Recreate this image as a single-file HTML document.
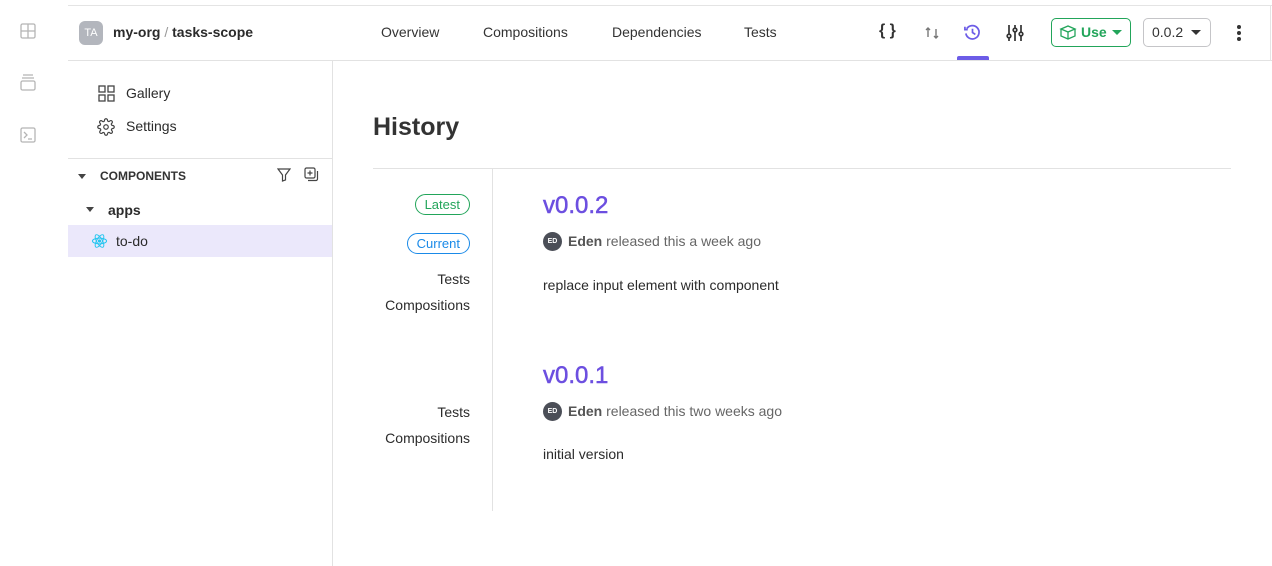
<!DOCTYPE html><html><head><style>
*{margin:0;padding:0;box-sizing:border-box}
body{width:1272px;height:566px;background:#fff;font-family:"Liberation Sans",sans-serif;color:#2b2b2b;position:relative;overflow:hidden;font-size:14px}
.a{position:absolute}
.rail svg{position:absolute;left:20px}
.nav{font-size:14px;color:#333}
.pill{position:absolute;border-radius:12px;font-size:13px;padding:2px 9px;line-height:15px}
.gray{color:#666}
.r{position:absolute;right:802px}
</style></head><body>
<div class="a" style="left:68px;top:5px;width:1204px;height:1px;background:#e4e4e4"></div>
<div class="a" style="left:68px;top:60px;width:1204px;height:1px;background:#e2e2e2"></div>
<div class="a" style="left:332px;top:61px;width:1px;height:505px;background:#e2e2e2"></div>
<div class="a" style="left:1270px;top:5px;width:1px;height:56px;background:#e4e4e4"></div>
<div class="rail">
<svg style="top:23px" width="16" height="16" viewBox="0 0 16 16" fill="none" stroke="#b5b5b5" stroke-width="1.3"><rect x="1" y="1" width="14" height="14" rx="1.5"/><path d="M8 1v14M1 8h14"/></svg>
<svg style="top:74px" width="16" height="18" viewBox="0 0 16 18" fill="none" stroke="#b5b5b5" stroke-width="1.3"><path d="M3 1h10M2 4h12"/><rect x="1" y="7" width="14" height="9" rx="1.5"/></svg>
<svg style="top:127px" width="16" height="16" viewBox="0 0 16 16" fill="none" stroke="#b5b5b5" stroke-width="1.3"><rect x="1" y="1" width="14" height="14" rx="1.5"/><path d="M4 5l3 3-3 3M8 12h4"/></svg>
</div>
<div class="a" style="left:79px;top:21px;width:24px;height:24px;border-radius:6px;background:#b3b6bd;color:#fff;font-size:11px;text-align:center;line-height:24px">TA</div>
<div class="a" style="left:113px;top:24px;font-weight:bold;font-size:14px">my-org<span style="color:#999;font-weight:normal"> / </span>tasks-scope</div>
<div class="a nav" style="left:381px;top:24px">Overview</div>
<div class="a nav" style="left:483px;top:24px">Compositions</div>
<div class="a nav" style="left:612px;top:24px">Dependencies</div>
<div class="a nav" style="left:744px;top:24px">Tests</div>
<div class="a" style="left:879px;top:22px;font-size:16px;font-weight:bold;color:#333">{ }</div>
<svg class="a" style="left:924px;top:25px" width="16" height="16" viewBox="0 0 16 16" fill="none" stroke="#777" stroke-width="1.4"><path d="M4 3v9M2 5l2-2 2 2M12 13V4M10 11l2 2 2-2"/></svg>
<svg class="a" style="left:963px;top:23px" width="19" height="19" viewBox="0 0 20 20" fill="none" stroke="#6c5ce7" stroke-width="1.8"><path d="M4 6a7 7 0 1 1-1 5"/><path d="M2 4v3h3"/><path d="M10 6v4l3 2"/></svg>
<div class="a" style="left:957px;top:56px;width:32px;height:4px;border-radius:2px 2px 0 0;background:#6c5ce7"></div>
<svg class="a" style="left:1005px;top:23px" width="20" height="20" viewBox="0 0 20 20" fill="none" stroke="#333" stroke-width="1.7"><path d="M4 2v16M10 2v16M16 2v16"/><circle cx="4" cy="13" r="1.8" fill="#fff"/><circle cx="10" cy="7" r="1.8" fill="#fff"/><circle cx="16" cy="11" r="1.8" fill="#fff"/></svg>
<div class="a" style="left:1051px;top:18px;width:80px;height:29px;border:1px solid #22a55a;border-radius:5px"></div>
<svg class="a" style="left:1059px;top:24px" width="18" height="17" viewBox="0 0 18 17" fill="none" stroke="#22a55a" stroke-width="1.3"><path d="M2 5l7-3 7 3-7 3zM2 5v7l7 3 7-3V5M9 8v7"/></svg>
<div class="a" style="left:1081px;top:24px;color:#22a55a;font-weight:bold">Use</div>
<div class="a" style="left:1112px;top:30px;border:5px solid transparent;border-top:5px solid #22a55a"></div>
<div class="a" style="left:1143px;top:18px;width:68px;height:29px;border:1px solid #c5c5c8;border-radius:5px"></div>
<div class="a" style="left:1152px;top:24px;color:#333">0.0.2</div>
<div class="a" style="left:1191px;top:30px;border:5px solid transparent;border-top:5px solid #333"></div>
<div class="a" style="left:1237px;top:25px;width:4px;height:4px;border-radius:2px;background:#333;box-shadow:0 6px #333,0 12px #333"></div>
<svg class="a" style="left:98px;top:85px" width="17" height="17" viewBox="0 0 17 17" fill="none" stroke="#444" stroke-width="1.3"><rect x="1" y="1" width="6" height="6"/><rect x="10" y="1" width="6" height="6"/><rect x="1" y="10" width="6" height="6"/><rect x="10" y="10" width="6" height="6"/></svg>
<div class="a" style="left:126px;top:85px">Gallery</div>
<svg class="a" style="left:97px;top:118px" width="18" height="18" viewBox="0 0 24 24" fill="none" stroke="#444" stroke-width="1.6"><circle cx="12" cy="12" r="3"/><path d="M19.4 15a1.7 1.7 0 0 0 .3 1.8l.1.1a2 2 0 1 1-2.8 2.8l-.1-.1a1.7 1.7 0 0 0-2.8 1.2V21a2 2 0 1 1-4 0v-.1a1.7 1.7 0 0 0-2.8-1.2l-.1.1a2 2 0 1 1-2.8-2.8l.1-.1A1.7 1.7 0 0 0 3.1 14H3a2 2 0 1 1 0-4h.1a1.7 1.7 0 0 0 1.2-2.8l-.1-.1a2 2 0 1 1 2.8-2.8l.1.1A1.7 1.7 0 0 0 10 3.1V3a2 2 0 1 1 4 0v.1a1.7 1.7 0 0 0 2.8 1.2l.1-.1a2 2 0 1 1 2.8 2.8l-.1.1A1.7 1.7 0 0 0 20.9 10H21a2 2 0 1 1 0 4h-.1a1.7 1.7 0 0 0-1.5 1z"/></svg>
<div class="a" style="left:126px;top:118px">Settings</div>
<div class="a" style="left:68px;top:158px;width:264px;height:1px;background:#e2e2e2"></div>
<div class="a" style="left:78px;top:174px;border:4px solid transparent;border-top:5px solid #444"></div>
<div class="a" style="left:100px;top:169px;font-size:12px;font-weight:bold;color:#333">COMPONENTS</div>
<svg class="a" style="left:277px;top:168px" width="14" height="14" viewBox="0 0 14 14" fill="none" stroke="#444" stroke-width="1.2"><path d="M1 1h12L8.5 7v5l-3 1V7z"/></svg>
<svg class="a" style="left:304px;top:167px" width="15" height="15" viewBox="0 0 15 15" fill="none" stroke="#444" stroke-width="1.2"><rect x="1" y="1" width="10" height="10" rx="1.5"/><path d="M6 3.5v5M3.5 6h5M13.5 4v8a1.5 1.5 0 0 1-1.5 1.5H4"/></svg>
<div class="a" style="left:86px;top:207px;border:4px solid transparent;border-top:5px solid #444"></div>
<div class="a" style="left:108px;top:202px;font-weight:bold">apps</div>
<div class="a" style="left:68px;top:225px;width:264px;height:32px;background:#ebe8fb"></div>
<svg class="a" style="left:91px;top:233px" width="17" height="16" viewBox="0 0 24 22" fill="none" stroke="#27c6f0" stroke-width="1.4"><ellipse cx="12" cy="11" rx="10" ry="4"/><ellipse cx="12" cy="11" rx="10" ry="4" transform="rotate(60 12 11)"/><ellipse cx="12" cy="11" rx="10" ry="4" transform="rotate(120 12 11)"/><circle cx="12" cy="11" r="1.6" fill="#27c6f0"/></svg>
<div class="a" style="left:116px;top:233px">to-do</div>
<div class="a" style="left:373px;top:113px;font-size:25px;font-weight:bold;color:#333">History</div>
<div class="a" style="left:373px;top:168px;width:858px;height:1px;background:#e2e2e2"></div>
<div class="a" style="left:492px;top:169px;width:1px;height:342px;background:#e2e2e2"></div>
<div class="pill" style="right:802px;top:194px;border:1px solid #22a55a;color:#22a55a;padding:2px 9px">Latest</div>
<div class="pill" style="right:802px;top:233px;border:1px solid #1a8ae8;color:#1a8ae8">Current</div>
<div class="r" style="top:271px">Tests</div>
<div class="r" style="top:297px">Compositions</div>
<div class="r" style="top:404px">Tests</div>
<div class="r" style="top:430px">Compositions</div>
<div class="a" style="left:543px;top:192px;font-size:24px;color:#6c4fe0;-webkit-text-stroke:0.5px #6c4fe0">v0.0.2</div>
<div class="a" style="left:543px;top:232px;width:19px;height:19px;border-radius:50%;background:#4b4e57;color:#fff;font-size:7px;font-weight:bold;text-align:center;line-height:19px">ED</div>
<div class="a gray" style="left:568px;top:233px"><b style="color:#555">Eden</b> released this a week ago</div>
<div class="a" style="left:543px;top:277px">replace input element with component</div>
<div class="a" style="left:543px;top:362px;font-size:24px;color:#6c4fe0;-webkit-text-stroke:0.5px #6c4fe0">v0.0.1</div>
<div class="a" style="left:543px;top:402px;width:19px;height:19px;border-radius:50%;background:#4b4e57;color:#fff;font-size:7px;font-weight:bold;text-align:center;line-height:19px">ED</div>
<div class="a gray" style="left:568px;top:403px"><b style="color:#555">Eden</b> released this two weeks ago</div>
<div class="a" style="left:543px;top:446px">initial version</div>
</body></html>
